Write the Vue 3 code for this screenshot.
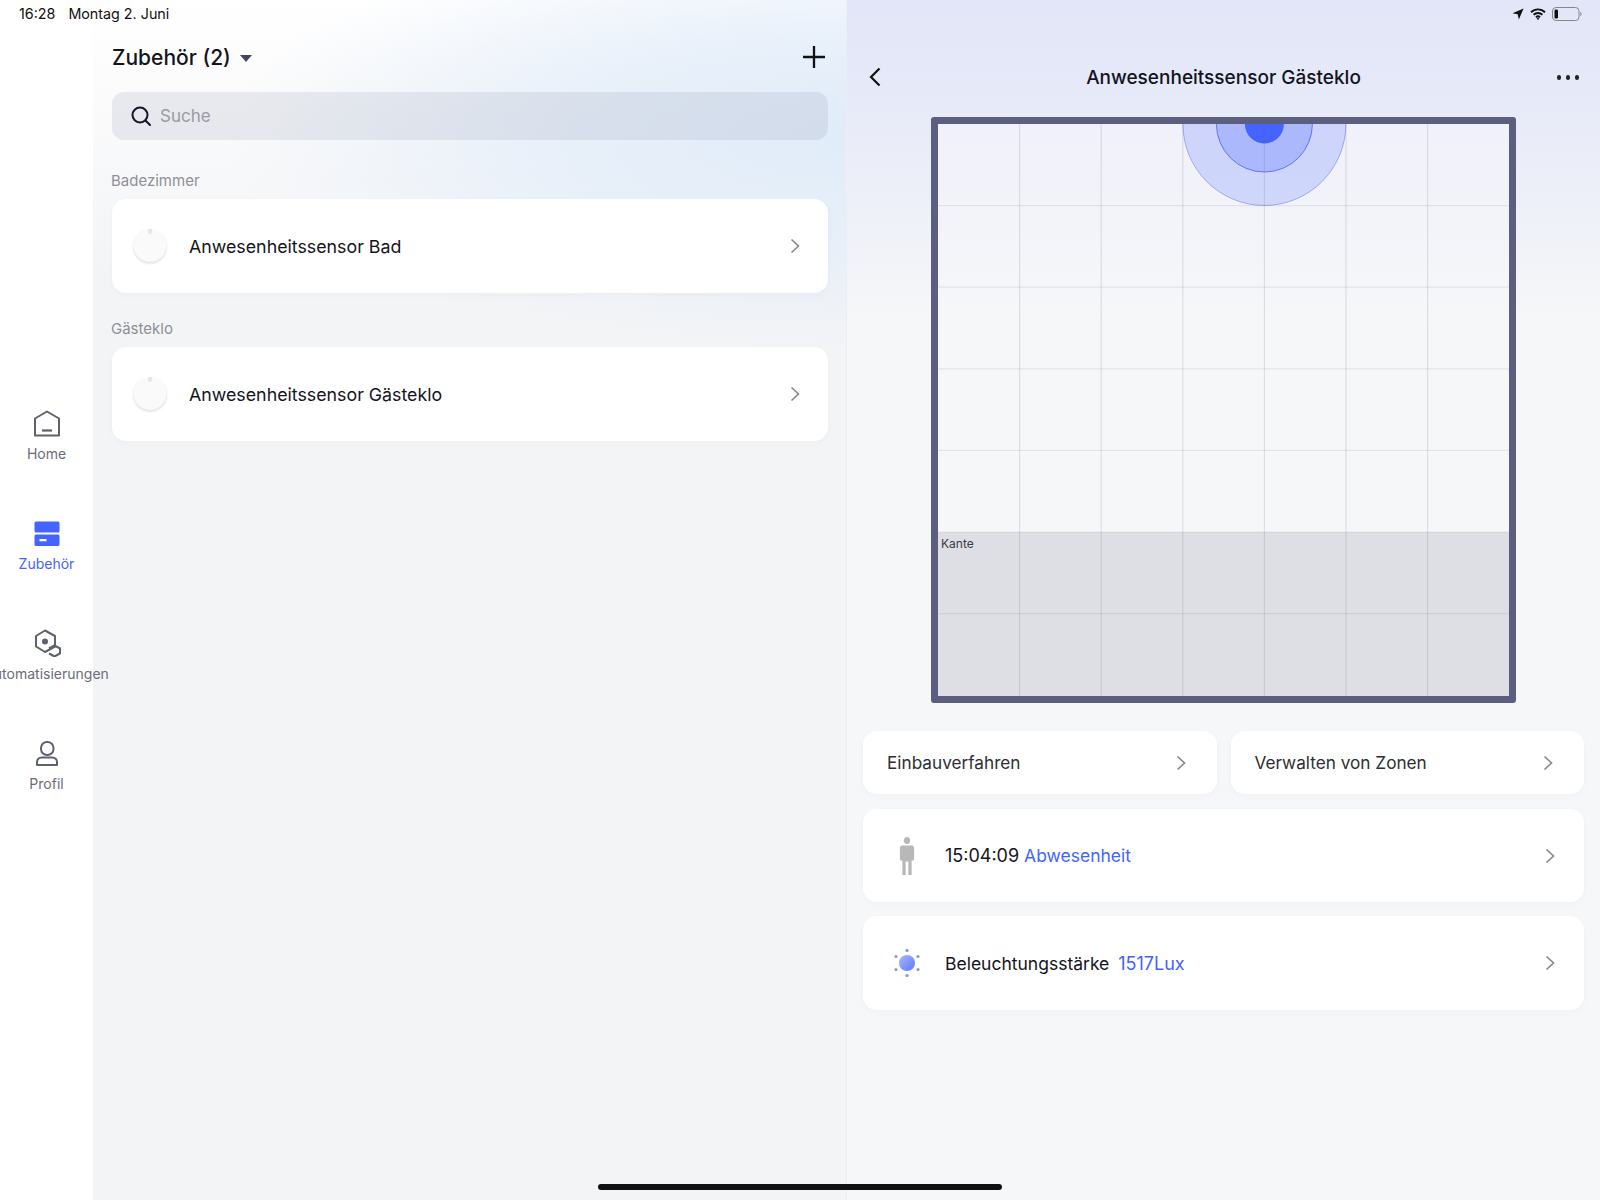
<script setup>
const navItems = [
  { id: 'home', label: 'Home' },
  { id: 'zubehoer', label: 'Zubehör', active: true },
  { id: 'auto', label: 'Automatisierungen' },
  { id: 'profil', label: 'Profil' }
]

const gruppen = [
  { raum: 'Badezimmer', name: 'Anwesenheitssensor Bad' },
  { raum: 'Gästeklo', name: 'Anwesenheitssensor Gästeklo' }
]

const CELL = 81.6
const gridLines = [1, 2, 3, 4, 5, 6].map((n) => n * CELL)
</script>

<template>
  <div class="app">
    <div class="status-bar">
      <div class="status-left"><span>16:28</span><span>Montag 2. Juni</span></div>
      <div class="status-right">
        <svg width="12" height="12" viewBox="0 0 11 11"><path d="M10.6.4 6.3 10.6 5.2 5.8.4 4.7z" fill="#111" /></svg>
        <svg width="16" height="12" viewBox="0 0 16 12" fill="none" stroke="#111" stroke-width="1.9">
          <path d="M1 4.2a10 10 0 0 1 14 0" />
          <path d="M3.6 6.8a6.3 6.3 0 0 1 8.8 0" />
          <path d="M6 9.2a2.9 2.9 0 0 1 4 0" />
          <circle cx="8" cy="10.6" r=".7" fill="#111" stroke-width="1" />
        </svg>
        <svg width="30" height="14" viewBox="0 0 30 14" fill="none">
          <rect x=".5" y=".5" width="26.5" height="13" rx="3.5" stroke="#85858f" />
          <rect x="2.5" y="2.5" width="3.5" height="9" rx="1.2" fill="#111" />
          <path d="M28.4 5v4c.8-.3 1.2-1 1.2-2s-.4-1.700-1.200-2z" fill="#85858f" />
        </svg>
      </div>
    </div>

    <nav class="sidebar">
      <div v-for="item in navItems" :key="item.id" class="nav-item" :class="{ active: item.active }">
        <svg class="nav-icon" width="28" height="28" viewBox="0 0 28 28" fill="none" stroke="#5f6070" stroke-width="2">
          <template v-if="item.id === 'home'">
            <path d="M2 9.500 14 2.500l12 7V26.500H2z" stroke-linejoin="round" />
            <path d="M9 21.500h10" stroke-width="2.200" />
          </template>
          <template v-else-if="item.id === 'zubehoer'">
            <rect x="1.500" y="2.500" width="25" height="11" rx="1.500" fill="#4463ff" stroke="none" />
            <rect x="1.500" y="15.500" width="25" height="11.500" rx="1.500" fill="#4463ff" stroke="none" />
            <rect x="6.500" y="20" width="7" height="2.300" fill="#fff" stroke="none" />
          </template>
          <template v-else-if="item.id === 'auto'">
            <path d="M12 1.500 22 7v10.500L12 23 3 17.500V7z" stroke-linejoin="round" />
            <circle cx="12" cy="12.500" r="3" fill="#5f6070" stroke="none" />
            <path d="M21.500 16.500 27 19.500v5L21.500 27.500 16 24.500" stroke-linejoin="round" />
            <path d="M21.500 16.500 16 19.500" stroke-linejoin="round" />
          </template>
          <template v-else>
            <rect x="8" y="3" width="12.500" height="13" rx="6" />
            <path d="M4 26v-3c0-2.500 2-4.500 5-4.500h10c3 0 5 2 5 4.500v3z" stroke-linejoin="round" />
          </template>
        </svg>
        <span class="nav-label">{{ item.label }}</span>
      </div>
    </nav>

    <section class="list-panel">
      <header class="list-head">
        <h1>Zubehör (2)</h1>
        <span class="caret"></span>
        <svg class="plus" width="24" height="24" viewBox="0 0 24 24" stroke="#111" stroke-width="2.300">
          <path d="M12 1v22M1 12h22" />
        </svg>
      </header>

      <div class="search">
        <svg width="22" height="22" viewBox="0 0 22 22" fill="none" stroke="#14142a" stroke-width="2">
          <circle cx="10" cy="10" r="7.500" />
          <path d="m15.500 15.500 4.500 4.500" stroke-linecap="round" />
        </svg>
        <span>Suche</span>
      </div>

      <div v-for="gruppe in gruppen" :key="gruppe.raum" class="gruppe">
        <div class="raum">{{ gruppe.raum }}</div>
        <div class="device-card">
          <div class="disc"><span class="nub"></span></div>
          <span class="device-name">{{ gruppe.name }}</span>
          <svg class="chev" width="10" height="16" viewBox="0 0 10 16" fill="none" stroke="#85858a" stroke-width="1.600">
            <path d="m1.500 1.500 7 6.500-7 6.500" />
          </svg>
        </div>
      </div>
    </section>

    <section class="detail-panel">
      <header class="detail-head">
        <svg width="14" height="20" viewBox="0 0 14 20" fill="none" stroke="#111" stroke-width="2.200">
          <path d="M11.500 1.500 3 10l8.500 8.500" />
        </svg>
        <h2>Anwesenheitssensor Gästeklo</h2>
        <div class="dots"><i></i><i></i><i></i></div>
      </header>

      <div class="map">
        <svg class="map-svg" width="571" height="572" viewBox="0 0 571 572">
          <rect x="0" :y="5 * CELL" width="571" :height="2 * CELL + 2" fill="#dedfe4" />
          <circle :cx="4 * CELL" cy="0" r="81.500" fill="#4463ff" fill-opacity=".2" stroke="#4463ff" stroke-opacity=".45" />
          <circle :cx="4 * CELL" cy="0" r="48" fill="#4463ff" fill-opacity=".25" stroke="#4463ff" stroke-opacity=".8" />
          <circle :cx="4 * CELL" cy="0" r="19.500" fill="#4463ff" />
          <line v-for="x in gridLines" :key="'v' + x" :x1="x" :x2="x" y1="0" y2="572" stroke="#5f6070" stroke-opacity=".16" stroke-width="1.200" />
          <line v-for="y in gridLines" :key="'h' + y" x1="0" x2="571" :y1="y" :y2="y" stroke="#5f6070" stroke-opacity=".12" stroke-width="1.200" />
        </svg>
        <span class="kante">Kante</span>
      </div>

      <div class="actions">
        <div class="card action"><span>Einbauverfahren</span>
          <svg width="10" height="16" viewBox="0 0 10 16" fill="none" stroke="#85858a" stroke-width="1.600"><path d="m1.500 1.500 7 6.500-7 6.500" /></svg>
        </div>
        <div class="card action"><span>Verwalten von Zonen</span>
          <svg width="10" height="16" viewBox="0 0 10 16" fill="none" stroke="#85858a" stroke-width="1.600"><path d="m1.500 1.500 7 6.500-7 6.500" /></svg>
        </div>
      </div>

      <div class="card info presence">
        <div class="info-icon">
          <svg width="16" height="38" viewBox="0 0 18 38" preserveAspectRatio="none" fill="#b8b8b8">
            <circle cx="9" cy="3.500" r="3.500" />
            <path d="M3.500 8.500h11c1.500 0 2.500 1 2.500 2.500v11c0 1-.5 1.500-1.200 1.500h-1.600V38h-3.700V24.500H7.500V38H3.800V23.500H2.200C1.500 23.500 1 23 1 22V11c0-1.500 1-2.500 2.500-2.500z" />
          </svg>
        </div>
        <span class="info-text"><b>15:04:09</b> <em>Abwesenheit</em></span>
        <svg width="10" height="16" viewBox="0 0 10 16" fill="none" stroke="#85858a" stroke-width="1.600"><path d="m1.500 1.500 7 6.500-7 6.500" /></svg>
      </div>

      <div class="card info">
        <div class="info-icon">
          <svg width="28" height="28" viewBox="0 0 28 28">
            <defs>
              <linearGradient id="sun" x1="0" y1="0" x2="1" y2="1">
                <stop offset="0" stop-color="#a9b8ff" />
                <stop offset="1" stop-color="#5a78ff" />
              </linearGradient>
            </defs>
            <circle cx="14" cy="14" r="8" fill="url(#sun)" />
            <g fill="#7f96ff">
              <circle cx="14" cy="1.500" r="1.600" />
              <circle cx="14" cy="26.500" r="1.600" />
              <circle cx="3" cy="7.500" r="1.600" />
              <circle cx="25" cy="7.500" r="1.600" />
              <circle cx="3" cy="20.500" r="1.600" />
              <circle cx="25" cy="20.500" r="1.600" />
            </g>
          </svg>
        </div>
        <span class="info-text">Beleuchtungsstärke <em class="lux">1517Lux</em></span>
        <svg width="10" height="16" viewBox="0 0 10 16" fill="none" stroke="#85858a" stroke-width="1.600"><path d="m1.500 1.500 7 6.500-7 6.500" /></svg>
      </div>
    </section>

    <div class="home-indicator"></div>
  </div>
</template>

<style scoped>
.app {
  position: relative;
  display: grid;
  grid-template-columns: 93px 754px 753px;
  width: 1600px;
  height: 1200px;
  overflow: hidden;
  font-family: Inter, "Liberation Sans", sans-serif;
  color: #14141c;
}

.status-bar {
  position: absolute;
  top: 0;
  left: 0;
  right: 0;
  z-index: 5;
  display: flex;
  justify-content: space-between;
  align-items: center;
  height: 27px;
  padding: 0 18px 0 19px;
  font-size: 14.3px;
  color: #111;
}

.status-left {
  display: flex;
  gap: 13px;
}

.status-right {
  display: flex;
  align-items: center;
  gap: 6px;
}

.sidebar {
  position: relative;
  z-index: 2;
  display: flex;
  flex-direction: column;
  justify-content: center;
  padding-top: 2px;
  background: #fff;
}

.nav-item {
  display: flex;
  flex-direction: column;
  align-items: center;
  justify-content: center;
  gap: 8px;
  height: 110px;
  width: 93px;
}

.nav-icon {
  flex: none;
}

.nav-label {
  font-size: 14px;
  line-height: 18px;
  color: #6c6c78;
  white-space: nowrap;
}

.nav-item.active .nav-label {
  color: #4463ff;
}

.list-panel {
  padding: 0 18px 0 19px;
  background:
    radial-gradient(620px 215px at 100% 135px, #e0ecf9 0%, rgba(226, 236, 249, 0.75) 45%, rgba(243, 244, 246, 0) 100%),
    linear-gradient(180deg, #ffffff 0, #f3f4f6 280px);
  border-right: 1px solid #eceef1;
}

.list-head {
  display: flex;
  align-items: center;
  height: 92px;
  padding-top: 22px;
  box-sizing: border-box;
}

.list-head h1 {
  margin: 0;
  font-size: 21px;
  font-weight: 500;
}

.caret {
  margin: 3px 0 0 9px;
  border-left: 6px solid transparent;
  border-right: 6px solid transparent;
  border-top: 7px solid #44446a;
}

.plus {
  margin-left: auto;
  margin-right: 2px;
}

.search {
  display: flex;
  align-items: center;
  gap: 8px;
  height: 48px;
  padding-left: 18px;
  border-radius: 12px;
  background: rgba(125, 135, 160, 0.15);
  font-size: 17px;
  color: #9a9aa6;
}

.gruppe {
  padding-top: 31px;
}

.gruppe + .gruppe {
  padding-top: 26px;
}

.raum {
  margin-left: -1px;
  font-size: 15px;
  line-height: 19px;
  color: #8f8f98;
  margin-bottom: 9px;
}

.device-card {
  display: flex;
  align-items: center;
  height: 94px;
  padding: 0 28px 0 21px;
  border-radius: 14px;
  background: #fff;
  box-shadow: 0 2px 6px rgba(40, 50, 80, 0.03);
}

.disc {
  position: relative;
  width: 34px;
  height: 34px;
  border-radius: 50%;
  background: #fafafa;
  box-shadow: inset 0 -1px 1px #e3e3e3, 0 1px 2px rgba(0, 0, 0, 0.1);
}

.nub {
  position: absolute;
  top: 0;
  left: 15px;
  width: 4px;
  height: 5px;
  border-radius: 0 0 2px 2px;
  background: #e6e6e6;
}

.device-name {
  margin-left: 22px;
  font-size: 17.8px;
}

.chev {
  margin-left: auto;
}

.detail-panel {
  padding: 0 16px;
  background: linear-gradient(180deg, #e2e6f8 0, #e6e9f8 90px, #f6f7f9 320px);
}

.detail-head {
  position: relative;
  display: flex;
  align-items: center;
  justify-content: center;
  height: 117px;
  padding-top: 38px;
  box-sizing: border-box;
}

.detail-head > svg {
  position: absolute;
  left: 5px;
  top: 67px;
}

.detail-head h2 {
  margin: 0;
  font-size: 19px;
  font-weight: 500;
}

.dots {
  position: absolute;
  right: 5px;
  top: 75px;
  display: flex;
  gap: 4.5px;
}

.dots i {
  width: 4.5px;
  height: 4.5px;
  border-radius: 50%;
  background: #22222e;
}

.map {
  position: relative;
  width: 571px;
  height: 572px;
  margin: 0 auto;
  border: 7px solid #5c5e80;
  border-radius: 3px;
  overflow: hidden;
  background: linear-gradient(180deg, #f0f1fa 0, #f6f7f9 200px);
}

.map-svg {
  display: block;
}

.kante {
  position: absolute;
  left: 3px;
  top: 412px;
  font-size: 12px;
  color: #3a3a42;
}

.actions {
  display: grid;
  grid-template-columns: 1fr 1fr;
  gap: 14px;
  margin-top: 28px;
}

.card {
  display: flex;
  align-items: center;
  border-radius: 14px;
  background: #fff;
  box-shadow: 0 2px 6px rgba(40, 50, 80, 0.03);
}

.action {
  justify-content: space-between;
  height: 63px;
  padding: 0 31px 0 24px;
  font-size: 17.2px;
  color: #2e2e34;
}

.info {
  height: 94px;
  margin-top: 14px;
  padding: 0 29px 0 24px;
  font-size: 17.5px;
}

.info.presence {
  height: 93px;
  margin-top: 15px;
}

.info-icon {
  display: flex;
  justify-content: center;
  width: 40px;
  margin-right: 18px;
}

.info-text {
  flex: 1;
}

.info-text b {
  font-weight: 400;
  font-size: 18px;
}

.info-text em {
  font-style: normal;
  color: #4463ff;
}

.info-text .lux {
  margin-left: 4px;
  font-size: 18px;
}

.home-indicator {
  position: absolute;
  left: 598px;
  bottom: 10px;
  width: 404px;
  height: 6px;
  border-radius: 3px;
  background: #111;
  z-index: 5;
}
</style>

<style>
html,
body {
  margin: 0;
  background: #fff;
}
</style>
